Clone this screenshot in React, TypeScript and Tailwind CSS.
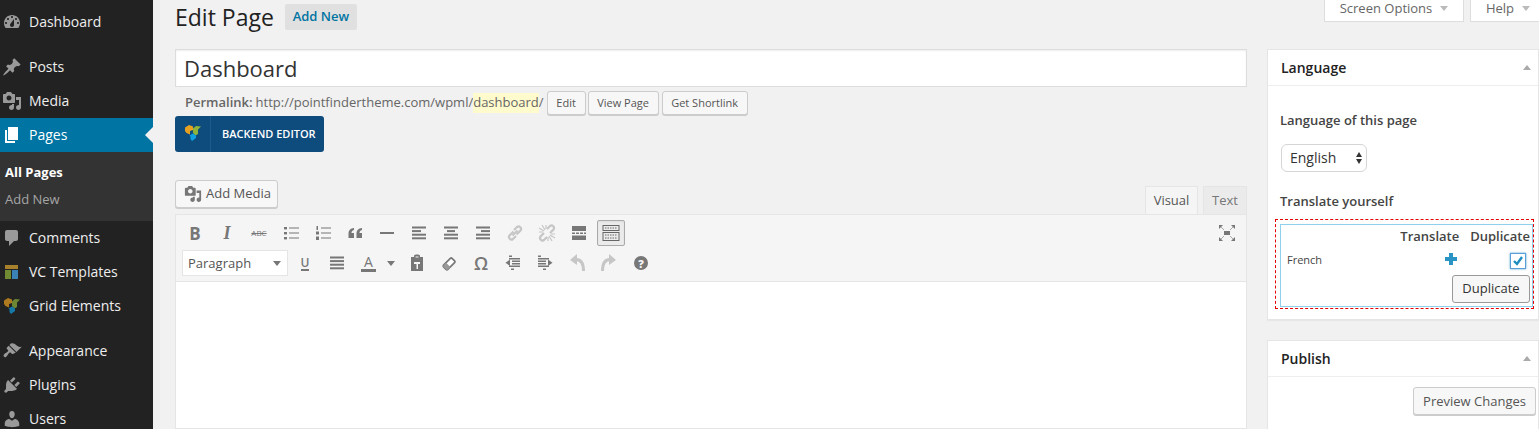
import * as React from "react"

const dash = {
  dashboard:
    "M3.76 16h12.48c1.1-1.37 1.76-3.11 1.76-5 0-4.42-3.58-8-8-8s-8 3.58-8 8c0 1.89.66 3.63 1.76 5zM10 4c.55 0 1 .45 1 1s-.45 1-1 1-1-.45-1-1 .45-1 1-1zM6 6c.55 0 1 .45 1 1s-.45 1-1 1-1-.45-1-1 .45-1 1-1zm8 0c.55 0 1 .45 1 1s-.45 1-1 1-1-.45-1-1 .45-1 1-1zm-5.37 5.55L12 7v6c0 1.1-.9 2-2 2s-2-.9-2-2c0-.57.24-1.08.63-1.45zM4 10c.55 0 1 .45 1 1s-.45 1-1 1-1-.45-1-1 .45-1 1-1zm12 0c.55 0 1 .45 1 1s-.45 1-1 1-1-.45-1-1 .45-1 1-1z",
  pin: "M10.44 3.02l1.82-1.82 6.36 6.35-1.83 1.82c-1.05-.68-2.48-.57-3.41.36l-.75.75c-.92.93-1.04 2.35-.35 3.41l-1.83 1.82-2.41-2.41-2.8 2.79c-.42.42-3.38 2.71-3.8 2.29s1.86-3.39 2.28-3.81l2.79-2.79L4.1 9.36l1.83-1.82c1.05.69 2.48.57 3.4-.36l.75-.75c.93-.92 1.05-2.35.36-3.41z",
  media:
    "M13 11V4c0-.55-.45-1-1-1h-1.67L9 1H5L3.67 3H2c-.55 0-1 .45-1 1v7c0 .55.45 1 1 1h10c.55 0 1-.45 1-1zM7 4.5c1.38 0 2.5 1.12 2.5 2.5S8.38 9.5 7 9.5 4.5 8.38 4.5 7 5.62 4.5 7 4.5zM14 6h5v10.5c0 1.38-1.12 2.5-2.5 2.5S14 17.88 14 16.5s1.12-2.5 2.5-2.5c.17 0 .34.02.5.05V9h-3V6zm-4 8.05V13h2v3.5c0 1.38-1.12 2.5-2.5 2.5S7 17.88 7 16.5 8.12 14 9.5 14c.17 0 .34.02.5.05z",
  pages: "M6 15V2h10v13H6zm-1 1h8v2H3V5h2v11z",
  comments: "M5 2h9c1.1 0 2 .9 2 2v7c0 1.1-.9 2-2 2h-2l-5 5v-5H5c-1.1 0-2-.9-2-2V4c0-1.1.9-2 2-2z",
  appearance:
    "M14.48 11.06L7.41 3.99l1.5-1.5c.5-.56 2.3-.47 3.51.32 1.21.8 1.43 1.28 2.91 2.1 1.18.64 2.45 1.26 4.45.85zm-.71.71L6.7 4.7 4.93 6.47c-.39.39-.39 1.02 0 1.41l1.06 1.06c.39.39.39 1.03 0 1.42-.6.6-1.43 1.27-2.21 1.7-.78.43-1.5 1.24-1.5 1.24l-.5.5c-.39.39-.39 1.02 0 1.41l.7.7c.39.39 1.03.39 1.42 0l.5-.5s.81-.72 1.24-1.5c.43-.78 1.1-1.61 1.7-2.21.39-.39 1.03-.39 1.42 0l1.06 1.06c.39.39 1.02.39 1.41 0z",
  plugins:
    "M13.11 4.36L9.87 7.6 8 5.73l3.24-3.24c.35-.34 1.05-.2 1.56.32.52.51.66 1.21.31 1.55zm-8 1.77l.91-1.12 9.01 9.01-1.19.84c-.71.71-2.63 1.16-3.82 1.16H6.14L4.9 17.26c-.59.59-1.54.59-2.12 0-.59-.58-.59-1.53 0-2.12l1.24-1.24v-3.88c0-1.13.4-3.19 1.09-3.89zm7.26 3.97l3.24-3.24c.34-.35 1.04-.21 1.55.31.52.51.66 1.21.31 1.56l-3.24 3.24z",
  users:
    "M10 9.25c-2.27 0-2.73-3.44-2.73-3.44C7 4.02 7.82 2 9.97 2c2.16 0 2.98 2.02 2.71 3.81 0 0-.41 3.44-2.68 3.44zm0 2.57L12.72 10c2.39 0 4.52 2.33 4.52 4.53v2.49s-3.65 1.13-7.24 1.13c-3.65 0-7.24-1.13-7.24-1.13v-2.49c0-2.25 1.94-4.48 4.47-4.48z",
}

const Dash = ({ d, className }: { d: string; className?: string }) => (
  <svg viewBox="0 0 20 20" className={className} fill="currentColor">
    <path d={d} />
  </svg>
)

const VcLogo = ({ className }: { className?: string }) => (
  <svg viewBox="0 0 16 16" className={className}>
    <path d="M0 2.500L4 0l4 1.500V5L5 6v3.500L1.500 8 0 6z" fill="#e8a020" />
    <path d="M8 3.500L11 1l5 .5-3 3v4.500l-2.500 1.500L8 8z" fill="#8db33a" />
    <path d="M4.500 10.500L8 8.500l3 2v2.500L7 16l-1.500-2v-2.500z" fill="#10a0e0" />
  </svg>
)

const VcTemplates = () => (
  <svg viewBox="0 0 14 14" className="h-[14px] w-[14px]">
    <rect x="0" y="0" width="13" height="4" fill="#a7812c" />
    <rect x="0" y="5" width="6" height="9" fill="#6f8a32" />
    <rect x="7" y="5" width="6" height="9" fill="#3a82b5" />
  </svg>
)

const SideItem = ({ icon, label, active }: { icon: React.ReactNode; label: string; active?: boolean }) => (
  <div className={`relative flex h-[34px] items-center ${active ? "bg-[#0074a2] text-white" : "text-[#eeeeee]"}`}>
    <div className={`flex w-[29px] justify-center pr-[6px] ${active ? "text-white" : "text-[#999999]"}`}>{icon}</div>
    <span className="text-[14px] font-medium leading-none">{label}</span>
    {active && (
      <span className="absolute right-0 top-[9px] h-0 w-0 border-y-[8px] border-r-[8px] border-y-transparent border-r-[#f1f1f1]" />
    )}
  </div>
)

const Sidebar = () => (
  <aside className="h-[429px] w-[153px] shrink-0 overflow-hidden bg-[#222222]">
    <div className="pt-[5px]">
      <SideItem label="Dashboard" icon={<Dash d={dash.dashboard} className="h-5 w-5" />} />
    </div>
    <div className="mt-[11px]">
      <SideItem label="Posts" icon={<Dash d={dash.pin} className="h-5 w-5" />} />
      <SideItem label="Media" icon={<Dash d={dash.media} className="h-5 w-5" />} />
      <SideItem active label="Pages" icon={<Dash d={dash.pages} className="h-5 w-5" />} />
    </div>
    <div className="flex h-[69px] flex-col bg-[#333333] pl-[5px] pt-[7px] text-[13px]">
      <span className="flex h-[27px] items-center font-bold text-white">All Pages</span>
      <span className="flex h-[27px] items-center text-[#a5a5a5]">Add New</span>
    </div>
    <SideItem label="Comments" icon={<Dash d={dash.comments} className="h-5 w-5" />} />
    <SideItem label="VC Templates" icon={<VcTemplates />} />
    <SideItem label="Grid Elements" icon={<VcLogo className="h-4 w-4 opacity-70" />} />
    <div className="mt-[11px]">
      <SideItem label="Appearance" icon={<Dash d={dash.appearance} className="h-5 w-5" />} />
      <SideItem label="Plugins" icon={<Dash d={dash.plugins} className="h-5 w-5" />} />
      <SideItem label="Users" icon={<Dash d={dash.users} className="h-5 w-5" />} />
    </div>
  </aside>
)

const Btn = ({ children, className = "" }: { children: React.ReactNode; className?: string }) => (
  <span
    className={`inline-flex items-center justify-center rounded-[3px] border border-[#cccccc] bg-[#f7f7f7] text-[#555555] shadow-[0_1px_0_#cccccc] ${className}`}
  >
    {children}
  </span>
)

const Lines = ({ rows }: { rows: [number, number][] }) => (
  <svg viewBox="0 0 20 20" className="h-5 w-5" fill="#777777">
    {rows.map(([x, w], i) => (
      <rect key={i} x={x} y={3.5 + i * 3.6} width={w} height={2} />
    ))}
  </svg>
)

const ToolBtn = ({ children, className = "" }: { children: React.ReactNode; className?: string }) => (
  <span className={`flex h-[26px] w-[32px] items-center justify-center text-[#777777] ${className}`}>{children}</span>
)

const FirstRow = () => (
  <div className="flex h-[26px] items-center">
    <ToolBtn><span className="text-[17px] font-bold leading-none">B</span></ToolBtn>
    <ToolBtn><span className="font-['Liberation_Serif',serif] text-[18px] font-bold italic leading-none">I</span></ToolBtn>
    <ToolBtn><span className="text-[8px] leading-none line-through">ABC</span></ToolBtn>
    <ToolBtn>
      <svg viewBox="0 0 20 20" className="h-5 w-5" fill="#777777">
        <rect x="3" y="4" width="3" height="2.4" /><rect x="8" y="4.5" width="10" height="1" />
        <rect x="3" y="9" width="3" height="2.4" /><rect x="8" y="9.5" width="10" height="1" />
        <rect x="3" y="14" width="3" height="2.4" /><rect x="8" y="14.5" width="10" height="1" />
      </svg>
    </ToolBtn>
    <ToolBtn>
      <svg viewBox="0 0 20 20" className="h-5 w-5" fill="#777777">
        <rect x="3.5" y="3" width="1.5" height="4" /><rect x="3" y="8.5" width="3" height="3" /><rect x="3" y="13.5" width="3" height="3.5" />
        <rect x="8" y="4.5" width="10" height="1" /><rect x="8" y="9.5" width="10" height="1" /><rect x="8" y="14.5" width="10" height="1" />
      </svg>
    </ToolBtn>
    <ToolBtn>
      <svg viewBox="0 0 20 20" className="h-5 w-5" fill="#777777">
        <path d="M9 5v2C7 7.5 6.5 8.5 6.5 10H9v5H3.5v-4.500C3.500 7.500 5.500 5.200 9 5zM17 5v2c-2 .5-2.500 1.500-2.500 3H17v5h-5.500v-4.500C11.500 7.500 13.500 5.200 17 5z" />
      </svg>
    </ToolBtn>
    <ToolBtn>
      <svg viewBox="0 0 20 20" className="h-5 w-5" fill="#777777"><rect x="3" y="9" width="14" height="2" /></svg>
    </ToolBtn>
    <ToolBtn><Lines rows={[[3, 14], [3, 9], [3, 14], [3, 14]]} /></ToolBtn>
    <ToolBtn><Lines rows={[[3, 14], [6, 8], [3, 14], [3, 14]]} /></ToolBtn>
    <ToolBtn><Lines rows={[[3, 14], [8, 9], [3, 14], [3, 14]]} /></ToolBtn>
    <ToolBtn>
      <svg viewBox="0 0 20 20" className="h-5 w-5" fill="none" stroke="#c6c6c6" strokeWidth="2.2">
        <path d="M8.5 8.500l-4 4a2.500 2.500 0 0 0 3.500 3.500l3-3" />
        <path d="M11.500 11.500l4-4A2.500 2.500 0 0 0 12 4L9 7" />
        <path d="M7.500 12.500l5-5" />
      </svg>
    </ToolBtn>
    <ToolBtn>
      <svg viewBox="0 0 20 20" className="h-5 w-5" fill="none" stroke="#c6c6c6" strokeWidth="2.2">
        <path d="M7 10l-3.500 3.500a2.500 2.500 0 0 0 3.500 3.500L10 14" />
        <path d="M13 10l3.500-3.500A2.500 2.500 0 0 0 13 3L10 6" />
        <path d="M5 2l3 5M2 5l5 3M2 9h4M9 2v4M15 18l-3-5M18 15l-5-3M18 11h-4M11 18v-4" strokeWidth="1.2" />
      </svg>
    </ToolBtn>
    <ToolBtn>
      <svg viewBox="0 0 20 20" className="h-5 w-5" fill="#777777">
        <rect x="3" y="3" width="14" height="5" />
        <rect x="3" y="9.500" width="3" height="1.500" /><rect x="7" y="9.500" width="3" height="1.500" /><rect x="11" y="9.500" width="3" height="1.500" /><rect x="15" y="9.500" width="2" height="1.500" />
        <rect x="3" y="12.500" width="14" height="4.500" />
      </svg>
    </ToolBtn>
    <span className="ml-[2px] flex h-[26px] w-[28px] items-center justify-center rounded-[2px] border border-[#aaaaaa] bg-[#ebebeb] shadow-[inset_0_1px_2px_#dddddd]">
      <svg viewBox="0 0 20 20" className="h-[20px] w-[20px]" fill="none" stroke="#666666">
        <rect x="2" y="2.500" width="16" height="5" />
        <rect x="2" y="9.500" width="16" height="8" />
        <path d="M4 5h12M4 12h12M4 15h12" strokeDasharray="1.500 1" />
      </svg>
    </span>
  </div>
)

const SecondRow = () => (
  <div className="mt-[4px] flex h-[26px] items-center">
    <span className="ml-[3px] flex h-[26px] w-[106px] items-center justify-between border border-[#e5e5e5] bg-white pb-[0px] pl-[5px] pr-[6px] pt-[1px] text-[13px] text-[#555555]">
      Paragraph
      <span className="h-0 w-0 border-x-[4px] border-t-[5px] border-x-transparent border-t-[#777777]" />
    </span>
    <span className="w-[1px]" />
    <ToolBtn><span className="border-b-[2px] border-[#777777] text-[12px] font-semibold leading-[13px]">U</span></ToolBtn>
    <ToolBtn><Lines rows={[[3, 14], [3, 14], [3, 14], [3, 14]]} /></ToolBtn>
    <span className="flex h-[26px] w-[48px] items-center pl-[8px] text-[#777777]">
      <span className="border-b-[3px] border-[#777777] px-[3px] text-[14px] leading-[14px]">A</span>
      <span className="ml-[11px] h-0 w-0 border-x-[4px] border-t-[5px] border-x-transparent border-t-[#777777]" />
    </span>
    <ToolBtn>
      <svg viewBox="0 0 20 20" className="h-5 w-5" fill="#777777">
        <path d="M4 4h3V3c0-1 1-1.500 3-1.500S13 2 13 3v1h3v14H4zM8.500 3.500v1h3v-1zM7 9v2h2.500v5h1.500v-5h2V9z" fillRule="evenodd" />
      </svg>
    </ToolBtn>
    <ToolBtn>
      <svg viewBox="0 0 20 20" className="h-[17px] w-[17px]">
        <path d="M3 12l8-8c.6-.6 1.400-.6 2 0l3 3c.6.6.6 1.400 0 2l-8 8c-.6.6-1.400.6-2 0l-3-3c-.6-.6-.6-1.400 0-2z" fill="#ffffff" stroke="#777777" strokeWidth="2" />
        <path d="M3 12l3-3 5 5-3 3c-.6.6-1.400.6-2 0l-3-3c-.6-.6-.6-1.400 0-2z" fill="#999999" />
      </svg>
    </ToolBtn>
    <ToolBtn><span className="text-[18px] font-semibold leading-none">Ω</span></ToolBtn>
    <ToolBtn>
      <svg viewBox="0 0 20 20" className="h-5 w-5" fill="#777777">
        <rect x="6" y="2.500" width="3" height="1.500" /><rect x="6" y="5" width="11" height="1.500" /><rect x="9" y="7.500" width="8" height="1.500" />
        <rect x="9" y="10" width="8" height="1.500" /><rect x="6" y="12.500" width="11" height="1.500" /><rect x="8" y="15.500" width="3" height="1.500" />
        <path d="M7 6.500V13L2.500 9.700z" />
      </svg>
    </ToolBtn>
    <ToolBtn>
      <svg viewBox="0 0 20 20" className="h-5 w-5" fill="#777777">
        <rect x="3" y="2.500" width="3" height="1.500" /><rect x="3" y="5" width="11" height="1.500" /><rect x="3" y="7.500" width="8" height="1.500" />
        <rect x="3" y="10" width="8" height="1.500" /><rect x="3" y="12.500" width="11" height="1.500" /><rect x="8" y="15.500" width="3" height="1.500" />
        <path d="M13 6.500V13l4.500-3.300z" />
      </svg>
    </ToolBtn>
    <ToolBtn>
      <svg viewBox="0 0 20 20" className="h-5 w-5">
        <path d="M3 7l7-6v11z" fill="#c6c6c6" />
        <path d="M9 6.500c5 0 7.500 4.500 7.500 11.500" fill="none" stroke="#c6c6c6" strokeWidth="3" />
      </svg>
    </ToolBtn>
    <ToolBtn>
      <svg viewBox="0 0 20 20" className="h-5 w-5">
        <path d="M17 7l-7-6v11z" fill="#c6c6c6" />
        <path d="M11 6.500c-5 0-7.500 4.500-7.500 11.500" fill="none" stroke="#c6c6c6" strokeWidth="3" />
      </svg>
    </ToolBtn>
    <ToolBtn>
      <span className="flex h-[14px] w-[14px] items-center justify-center rounded-full bg-[#777777] text-[11px] font-extrabold leading-none text-[#f5f5f5]">?</span>
    </ToolBtn>
  </div>
)

const Editor = () => (
  <div className="flex flex-1 flex-col border border-[#e5e5e5] bg-white">
    <div className="relative h-[67px] border-b border-[#e5e5e5] bg-[#f5f5f5] pl-[3px] pt-[5px]">
      <FirstRow />
      <SecondRow />
      <svg viewBox="0 0 20 20" className="absolute right-[9px] top-[8px] h-5 w-5" fill="#777777" stroke="#777777">
        <rect x="7" y="8" width="6" height="4" strokeWidth="0" />
        <path d="M2 2h4L2 6zM18 2v4l-4-4zM2 18v-4l4 4zM18 18h-4l4-4z" strokeWidth="0" />
        <path d="M3.500 3.500L7 7M16.500 3.500L13 7M3.500 16.500L7 13M16.500 16.500L13 13" fill="none" strokeWidth="1" opacity="0.6" />
      </svg>
    </div>
  </div>
)

const MainColumn = () => (
  <div className="flex h-[429px] w-[1072px] shrink-0 flex-col">
    <div className="mt-[4px] flex h-[26px] items-center">
      <h1 className="text-[23px] leading-none text-[#222222]">Edit Page</h1>
      <span className="ml-[11px] flex h-[26px] w-[72px] items-center justify-center rounded-[2px] bg-[#e0e0e0] text-[13px] font-semibold text-[#0074a2]">
        Add New
      </span>
    </div>
    <div className="mt-[19px] flex h-[38px] items-center border border-[#dddddd] bg-white pl-[8px] text-[22px] text-[#333333] shadow-[inset_0_1px_2px_rgba(0,0,0,0.07)]">
      Dashboard
    </div>
    <div className="mt-[4px] flex h-[24px] items-center pl-[10px] text-[13px] text-[#666666]">
      <span className="font-semibold">Permalink:</span>
      <span className="ml-[3px]">http://pointfindertheme.com/wpml/</span>
      <span className="bg-[#fffbcc]">dashboard</span>
      <span>/</span>
      <Btn className="ml-[3px] h-[24px] w-[39px] text-[11px]">Edit</Btn>
      <Btn className="ml-[2px] h-[24px] w-[71px] text-[11px]">View Page</Btn>
      <Btn className="ml-[3px] h-[24px] w-[86px] text-[11px]">Get Shortlink</Btn>
    </div>
    <div className="mt-[1px] flex h-[36px] w-[149px] items-center rounded-[3px] bg-[#0f4c7e] text-white">
      <span className="flex h-full w-[36px] items-center justify-center border-r border-[#1c5a8c] pb-[2px]">
        <VcLogo className="h-4 w-4" />
      </span>
      <span className="ml-[11px] text-[11px] font-semibold">BACKEND EDITOR</span>
    </div>
    <div className="mt-[28px] flex h-[34px] items-start justify-between">
      <Btn className="h-[28px] w-[103px] !justify-start gap-[4px] pl-[8px] text-[13px]">
        <Dash d={dash.media} className="h-[18px] w-[18px] text-[#777777]" />
        Add Media
      </Btn>
      <div className="flex h-[28px] self-end">
        <span className="flex h-[28px] w-[53px] items-center justify-center border border-b-0 border-[#e5e5e5] bg-[#f5f5f5] text-[13px] text-[#555555]">
          Visual
        </span>
        <span className="ml-[5px] flex h-[28px] w-[44px] items-center justify-center border border-b-0 border-[#e5e5e5] bg-[#ebebeb] text-[13px] text-[#777777]">
          Text
        </span>
      </div>
    </div>
    <Editor />
  </div>
)

const BoxHeader = ({ title }: { title: string }) => (
  <div className="flex h-[36px] items-center justify-between border-b border-[#eeeeee] pl-[13px] pr-[7px]">
    <span className="text-[14px] font-semibold text-[#222222]">{title}</span>
    <span className="h-0 w-0 border-x-[4px] border-b-[5px] border-x-transparent border-b-[#aaaaaa]" />
  </div>
)

const LanguageBox = () => (
  <div className="h-[271px] border border-[#e5e5e5] bg-white shadow-[0_1px_1px_rgba(0,0,0,0.04)]">
    <BoxHeader title="Language" />
    <div className="pl-[12px] pr-[4px]">
      <p className="mt-[24px] text-[13px] font-semibold leading-[20px] text-[#444444]">Language of this page</p>
      <span className="ml-[1px] mt-[14px] flex h-[28px] w-[86px] items-center justify-between rounded-[6px] border border-[#d5d5d5] pb-[2px] pl-[8px] pr-[3px] text-[14px] text-[#333333]">
        English
        <span className="flex flex-col gap-[2px] pr-[1px] pt-[2px]">
          <span className="h-0 w-0 border-x-[3.5px] border-b-[5px] border-x-transparent border-b-[#333333]" />
          <span className="h-0 w-0 border-x-[3.5px] border-t-[5px] border-x-transparent border-t-[#333333]" />
        </span>
      </span>
      <p className="mt-[19px] text-[13px] font-semibold leading-[20px] text-[#444444]">Translate yourself</p>
      <div className="-ml-[5px] mt-[8px] h-[90px] w-[259px] border border-dashed border-[#e60000] p-[4px]">
        <div className="relative h-[83px] w-[253px] border border-[#8fd0ee] text-[#444444]">
          <div className="flex h-[24px] items-center justify-end gap-[11px] pr-[2px] text-[13px] font-semibold">
            <span>Translate</span>
            <span>Duplicate</span>
          </div>
          <div className="flex h-[22px] items-center pl-[6px] pr-[6px] text-[11px]">
            <span className="flex-1">French</span>
            <svg viewBox="0 0 12 12" className="mb-[3px] mr-[53px] h-[12px] w-[12px]" fill="#2a95c5">
              <path d="M4 0h4v4h4v4H8v4H4V8H0V4h4z" />
            </svg>
            <span className="mt-[1px] flex h-[16px] w-[16px] items-center justify-center border border-[#5b9dd9] bg-white shadow-[0_0_2px_rgba(30,140,190,0.8)]">
              <svg viewBox="0 0 12 12" className="h-[12px] w-[12px]" fill="none" stroke="#1e8cbe" strokeWidth="2.4">
                <path d="M2 6l3 3 5-7" />
              </svg>
            </span>
          </div>
          <div className="mt-[4px] flex justify-end pr-[2px]">
            <span className="flex h-[28px] w-[78px] items-center justify-center rounded-[3px] border border-[#999999] bg-[#f7f7f7] text-[13px] text-[#333333]">
              Duplicate
            </span>
          </div>
        </div>
      </div>
    </div>
  </div>
)

const PublishBox = () => (
  <div className="mt-[20px] h-[120px] border border-[#e5e5e5] bg-white">
    <BoxHeader title="Publish" />
    <div className="mt-[10px] flex justify-end pr-[2px]">
      <Btn className="h-[28px] w-[123px] pt-[1px] text-[13px]">Preview Changes</Btn>
    </div>
  </div>
)

const RightColumn = () => (
  <div className="ml-[20px] flex h-[429px] flex-1 flex-col overflow-hidden">
    <div className="flex h-[22px] shrink-0 justify-end">
      <span className="flex h-[22px] w-[140px] items-center justify-center gap-[8px] border border-t-0 border-[#dddddd] bg-white pb-[4px] text-[13px] text-[#666666]">
        Screen Options
        <span className="h-0 w-0 border-x-[4px] border-t-[5px] border-x-transparent border-t-[#bbbbbb]" />
      </span>
      <span className="ml-[6px] flex h-[22px] w-[69px] items-center justify-center gap-[8px] border-b border-l border-[#dddddd] bg-white pb-[4px] pl-[6px] text-[13px] text-[#666666]">
        Help
        <span className="h-0 w-0 border-x-[4px] border-t-[5px] border-x-transparent border-t-[#bbbbbb]" />
      </span>
    </div>
    <div className="mt-[27px] shrink-0">
      <LanguageBox />
      <PublishBox />
    </div>
  </div>
)

export default function App() {
  return (
    <div className="flex h-[429px] w-[1539px] overflow-hidden bg-[#f1f1f1] font-['Open_Sans',sans-serif]">
      <Sidebar />
      <div className="ml-[22px] flex flex-1">
        <MainColumn />
        <RightColumn />
      </div>
    </div>
  )
}
